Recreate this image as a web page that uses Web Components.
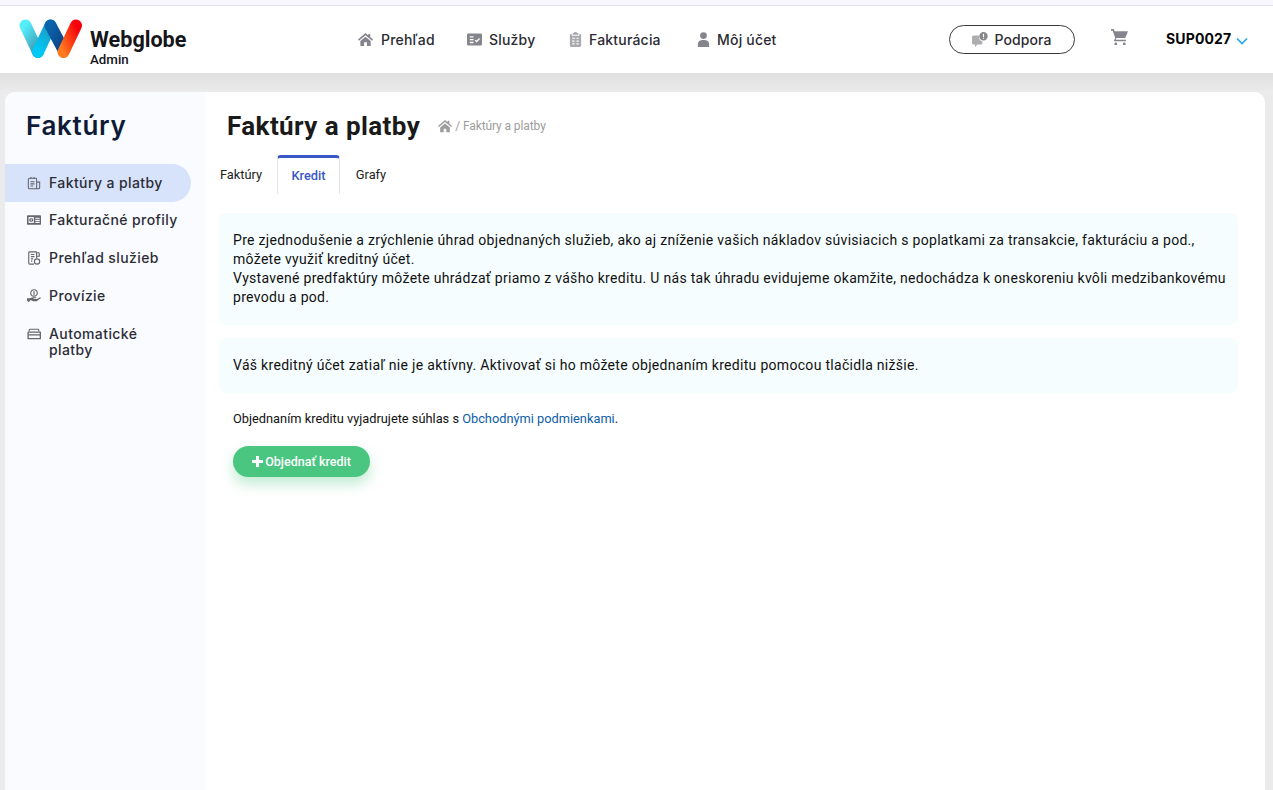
<!DOCTYPE html>
<html lang="sk">
<head>
<meta charset="utf-8">
<title>Faktúry a platby</title>
<style>
  html, body { margin: 0; padding: 0; height: 790px; overflow: hidden; }
  body { background: #ebebeb; font-family: Roboto, sans-serif; color: #111; }
</style>
</head>
<body>
<app-shell>
  <app-header slot="header"></app-header>
  <side-menu slot="side"></side-menu>
  <credit-page slot="main"></credit-page>
</app-shell>

<script>
const ICONS = {
  home: '<path d="M8 1 0 8l1 1.200L8 3.400l7 5.800L16 8l-3-2.600V2h-2v1.700z"/><path d="M2.500 9.600V15h4v-4h3v4h4V9.600L8 5z"/>',
  list: '<path fill-rule="evenodd" d="M1.500 1.500h13A1.500 1.500 0 0 1 16 3v10a1.500 1.500 0 0 1-1.500 1.500h-13A1.500 1.500 0 0 1 0 13V3a1.500 1.500 0 0 1 1.500-1.500zM3 4.500v1.400h4V4.500zm0 3v1.400h4V7.500zm0 3v1.400h4v-1.400zm6.300-2.300-1 1 2 2 3.600-3.800-1-1-2.600 2.700z"/>',
  clip: '<path fill-rule="evenodd" d="M5 1h1.400a1.700 1.700 0 0 1 3.200 0H11v2H5zM3.500 2H4v2h8V2h.5A1.500 1.500 0 0 1 14 3.500v11a1.500 1.500 0 0 1-1.500 1.500h-9A1.500 1.500 0 0 1 2 14.500v-11A1.500 1.500 0 0 1 3.500 2zM4.500 6v1.300h3V6zm4.500 0v1.300h2.500V6zM4.500 9v1.300h2.500V9zm4.500 0v1.300h2.500V9zM4.500 12v1.300h2.500V12zm4.500 0v1.300h2.500V12z"/>',
  user: '<circle cx="8" cy="3.800" r="3.600"/><path d="M2 16v-3.500C2 10 4.500 8.500 8 8.500s6 1.500 6 4V16z"/>',
  cart: '<path d="M0 1h2.600l.8 2H16l-2.600 6.500H5.200l-.8 1.500H14v1.500H2.500l1.500-3L1.600 2.500H0z"/><circle cx="4.500" cy="15" r="1.300"/><circle cx="12.500" cy="15" r="1.300"/>',
  invoice: '<path fill="none" stroke="currentColor" stroke-width="1.200" d="M3 2.500h7a1 1 0 0 1 1 1V14.500H3a1.500 1.500 0 0 1-1.500-1.500V4A1.500 1.500 0 0 1 3 2.500zM11 7h3.500v6a1.500 1.500 0 0 1-1.500 1.500h-2M4 6.500h4.500M4 9h4.500M4 11.500h3M4.500 1v2.500M8 1v2.500"/>',
  profile: '<path fill-rule="evenodd" d="M1 2.500h14a1 1 0 0 1 1 1v9a1 1 0 0 1-1 1H1a1 1 0 0 1-1-1v-9a1 1 0 0 1 1-1zm.800 2v7h6v-7zm7.700 1v1.200h5V5.500zm0 2.300v1.200h5V7.800zm0 2.300v1.200h5v-1.200z"/><circle cx="4.800" cy="8" r="2.300"/><path d="M4.300 6.500h1v3h-1z" fill="#f9fbff"/>',
  report: '<path fill="none" stroke="currentColor" stroke-width="1.300" d="M8 15H3a1 1 0 0 1-1-1V2a1 1 0 0 1 1-1h7a1 1 0 0 1 1 1v6M11 2h2a1 1 0 0 1 1 1v3h-3M4.500 4H8.500M4.500 6.500H8.500M4.500 9H7M4.500 11.500H6"/><circle cx="11.500" cy="12" r="3" fill="none" stroke="currentColor" stroke-width="1.300"/>',
  hand: '<path d="M0 10.500h3l4-1.200h3.500v1.400H7.500v.6h4l3.500-1.900 1 1-5 3.600H7L4 12.500l-2 2.500-2-2z"/><circle cx="8" cy="4.500" r="3.700" fill="none" stroke="currentColor" stroke-width="1.300"/><path d="M7.300 2.500h1.400v4H7.300z"/>',
  card: '<path fill="none" stroke="currentColor" stroke-width="1.200" d="M2.500 5V3.500a1 1 0 0 1 1-1h9a1 1 0 0 1 1 1V5"/><path fill-rule="evenodd" d="M1.500 5H15a1 1 0 0 1 1 1v7a1 1 0 0 1-1 1H1.500a1 1 0 0 1-1-1V6a1 1 0 0 1 1-1zM2 6.500v1.700h12.500V6.500zm0 3.300v2.700h12.500V9.800z"/>'
};

function icon(name, size) {
  return `<svg width="${size}" height="${size}" viewBox="0 0 16 16" fill="currentColor" aria-hidden="true">${ICONS[name]}</svg>`;
}

class AppShell extends HTMLElement {
  constructor() {
    super();
    this.attachShadow({mode: 'open'}).innerHTML = `
      <style>
        :host { display: block; height: 790px; }
        .strip { height: 5px; background: #f8f6ff; border-bottom: 1px solid #e4e0f0; }
        .band { height: 19px; background: linear-gradient(#dfdfdf, #ebebeb); }
        .card {
          display: flex;
          height: 698px;
          margin: 0 8px 0 5px;
          border-radius: 10px 10px 0 0;
          overflow: hidden;
          background: #fff;
        }
        .main { flex: 1; min-width: 0; }
      </style>
      <div class="strip"></div>
      <slot name="header"></slot>
      <div class="band"></div>
      <div class="card">
        <slot name="side"></slot>
        <div class="main"><slot name="main"></slot></div>
      </div>
    `;
  }
}

class AppHeader extends HTMLElement {
  constructor() {
    super();
    const links = [['home', 'Prehľad'], ['list', 'Služby'], ['clip', 'Fakturácia'], ['user', 'Môj účet']];
    this.attachShadow({mode: 'open'}).innerHTML = `
      <style>
        :host {
          display: flex;
          align-items: center;
          height: 67px;
          background: #fff;
          font-family: Inter, "Noto Sans", sans-serif;
          color: #2b2b33;
        }
        .logo { display: flex; align-items: center; width: 358px; padding: 0 0 0 19px; box-sizing: border-box; }
        .logo svg { margin-bottom: 2px; }
        .name { margin-left: 7px; padding-top: 16px; font-family: Roboto, sans-serif; color: #15151a; }
        .name b { display: block; font-size: 21.600px; line-height: 24px; font-weight: 700; }
        .name span { display: block; font-size: 13.300px; line-height: 16px; font-weight: 500; }
        nav { display: flex; width: 591px; }
        nav a { display: flex; align-items: center; font-size: 14px; font-weight: 500; letter-spacing: .2px; }
        nav a:nth-child(1) { width: 109px; }
        nav a:nth-child(2) { width: 101px; }
        nav a:nth-child(3) { width: 128px; }
        nav svg { color: #85858d; margin-right: 6px; }
        nav a:nth-child(1) svg { margin-right: 8px; }
        nav a:nth-child(2) svg { margin-right: 7px; }
        nav a:nth-child(3) svg { color: #a9a9ae; }
        .support {
          display: flex; align-items: center; justify-content: center; gap: 6px;
          width: 124px; height: 27px;
          border: 1px solid #3a3a3a; border-radius: 15px;
          font-size: 14px; font-weight: 500; letter-spacing: .1px;
        }
        .cart { display: flex; margin: 0 0 6px 36px; color: #85858d; }
        .acct { display: flex; align-items: center; margin: 0 0 3px 38px; font-size: 14px; font-weight: 700; letter-spacing: .15px; color: #050505; }
        .acct svg { margin-left: 5px; margin-top: 5px; }
      </style>
      <div class="logo">
        <svg width="64" height="40" viewBox="0 0 64 40" aria-hidden="true">
          <defs>
            <linearGradient id="a" x1="0" y1="0" x2="0.6" y2="1"><stop offset="0" stop-color="#55eefc"/><stop offset="1" stop-color="#3f9fb5"/></linearGradient>
            <linearGradient id="b" x1="0.7" y1="0" x2="0.3" y2="1"><stop offset="0" stop-color="#1c9cc4"/><stop offset="1" stop-color="#00c8f5"/></linearGradient>
            <linearGradient id="c" x1="0" y1="0" x2="1" y2="1"><stop offset="0" stop-color="#0a63ad"/><stop offset="1" stop-color="#0d3f80"/></linearGradient>
            <linearGradient id="d" x1="1" y1="0" x2="0" y2="1"><stop offset="0" stop-color="#f6000c"/><stop offset="1" stop-color="#ff7a1f"/></linearGradient>
          </defs>
          <path d="M6.500 6.500 19 33" stroke="url(#a)" stroke-width="12" stroke-linecap="round"/>
          <path d="M31.500 6.500 19 33" stroke="url(#b)" stroke-width="12" stroke-linecap="round"/>
          <path d="M31.500 6.500 44 30" stroke="url(#c)" stroke-width="12" stroke-linecap="round"/>
          <path d="M57 6.500 44.500 33" stroke="url(#d)" stroke-width="12" stroke-linecap="round"/>
        </svg>
        <div class="name"><b>Webglobe</b><span>Admin</span></div>
      </div>
      <nav>
        ${links.map(([i, t]) => `<a>${icon(i, 15)}<span>${t}</span></a>`).join('')}
      </nav>
      <div class="support">
        <svg width="16" height="15" viewBox="0 0 16 15" aria-hidden="true">
          <path d="M1.500 3.500H7a5 5 0 0 0 3.500 6V11A1.500 1.500 0 0 1 9 12.500H5.500L3 15v-2.500H1.500A1.500 1.500 0 0 1 0 11V5a1.500 1.500 0 0 1 1.500-1.500z" fill="#adadb1"/>
          <path fill-rule="evenodd" d="M11.500 0a4.200 4.200 0 1 1 0 8.400 4.200 4.200 0 0 1 0-8.400zm-.6 5.700v1h1.200v-1zm0-4v3.200h1.200V1.700z" fill="#85858a"/>
        </svg>
        <span>Podpora</span>
      </div>
      <div class="cart">${icon('cart', 17)}</div>
      <div class="acct">SUP0027
        <svg width="12" height="8" viewBox="0 0 12 8"><path d="M1 1.500l5 5 5-5" fill="none" stroke="#1fa8f0" stroke-width="1.600"/></svg>
      </div>
    `;
  }
}

class SideMenu extends HTMLElement {
  constructor() {
    super();
    const items = [['invoice', 'Faktúry a platby', true], ['profile', 'Fakturačné profily'], ['report', 'Prehľad služieb'], ['hand', 'Provízie'], ['card', 'Automatické platby']];
    this.attachShadow({mode: 'open'}).innerHTML = `
      <style>
        :host {
          display: block;
          box-sizing: border-box;
          width: 200px;
          height: 100%;
          background: #f9fbff;
          font-family: Inter, "Noto Sans", sans-serif;
          color: #2d2d35;
        }
        h2 { margin: 0; padding: 17px 0 0 21px; height: 72px; box-sizing: border-box; font-size: 26px; line-height: 34px; font-weight: 600; letter-spacing: .7px; color: #0d1a38; }
        ul { list-style: none; margin: 0; padding: 0 14px 0 0; }
        li {
          display: flex; gap: 8px;
          padding: 11px 12px 11px 22px;
          min-height: 16px;
          font-size: 14px; line-height: 16px; font-weight: 500; letter-spacing: .4px;
        }
        li.on { background: #d6e3fb; border-radius: 0 19px 19px 0; margin-bottom: -1px; }
        li svg { flex: none; color: #66666e; margin-top: 1px; }
        li span { width: 130px; }
      </style>
      <h2>Faktúry</h2>
      <ul>
        ${items.map(([i, t, on]) => `<li class="${on ? 'on' : ''}">${icon(i, 14)}<span>${t}</span></li>`).join('')}
      </ul>
    `;
  }
}

class InfoBox extends HTMLElement {
  constructor() {
    super();
    this.attachShadow({mode: 'open'}).innerHTML = `
      <style>
        :host {
          display: block;
          margin: 0 27px 13px 14px;
          padding: 18px 6px 18px 14px;
          background: #f5fdff;
          border-radius: 8px;
          font-size: 14px;
          line-height: 19px;
          letter-spacing: .3px;
          color: #111;
        }
      </style>
      <slot></slot>
    `;
  }
}

class CreditPage extends HTMLElement {
  constructor() {
    super();
    this.attachShadow({mode: 'open'}).innerHTML = `
      <style>
        :host { display: block; font-family: Roboto, sans-serif; color: #111; }
        header { display: flex; align-items: center; box-sizing: border-box; height: 63px; padding: 5px 0 0 22px; }
        h1 { margin: 0; font-size: 26px; font-weight: 700; letter-spacing: .42px; color: #1a1a1a; }
        .crumb { display: flex; align-items: center; gap: 3px; margin-left: 18px; font-size: 12px; letter-spacing: -.1px; color: #9d9d9d; }
        .tabs { display: flex; height: 39px; margin-bottom: 19px; font-size: 12.800px; }
        .tabs a { display: flex; align-items: center; justify-content: center; box-sizing: border-box; height: 39px; }
        .tabs a:nth-child(1) { width: 72px; color: #222; }
        .tabs a:nth-child(2) { width: 63px; padding-bottom: 2px; border: 1px solid #e6e6ea; border-top: 3px solid #3a57c8; border-bottom: 0; border-radius: 4px 4px 0 0; font-weight: 500; color: #3a57c8; }
        .tabs a:nth-child(3) { width: 62px; color: #222; }
        .note { margin: 17px 0 0 28px; font-size: 12.800px; line-height: 18px; }
        .note a { color: #0d5ea8; }
        .order {
          display: flex; align-items: center; justify-content: center; gap: 2px;
          width: 137px; height: 31px;
          margin: 18px 0 0 28px;
          background: #4ac681;
          border-radius: 16px;
          box-shadow: 0 7px 14px rgba(74, 198, 129, .35);
          color: #fff;
          font-size: 12.500px;
          font-weight: 500;
        }
      </style>
      <header>
        <h1>Faktúry a platby</h1>
        <div class="crumb">${icon('home', 14)}<span>/ Faktúry a platby</span></div>
      </header>
      <div class="tabs"><a>Faktúry</a><a>Kredit</a><a>Grafy</a></div>
      <info-box>Pre zjednodušenie a zrýchlenie úhrad objednaných služieb, ako aj zníženie vašich nákladov súvisiacich s poplatkami za transakcie, fakturáciu a pod., môžete využiť kreditný účet.<br>Vystavené predfaktúry môžete uhrádzať priamo z vášho kreditu. U nás tak úhradu evidujeme okamžite, nedochádza k oneskoreniu kvôli medzibankovému prevodu a pod.</info-box>
      <info-box>Váš kreditný účet zatiaľ nie je aktívny. Aktivovať si ho môžete objednaním kreditu pomocou tlačidla nižšie.</info-box>
      <p class="note">Objednaním kreditu vyjadrujete súhlas s <a>Obchodnými podmienkami</a>.</p>
      <div class="order">
        <svg width="11" height="11" viewBox="0 0 11 11"><path d="M4 0h3v4h4v3H7v4H4V7H0V4h4z" fill="#fff"/></svg>
        <span>Objednať kredit</span>
      </div>
    `;
  }
}

customElements.define('app-shell', AppShell);
customElements.define('app-header', AppHeader);
customElements.define('side-menu', SideMenu);
customElements.define('info-box', InfoBox);
customElements.define('credit-page', CreditPage);
</script>
</body>
</html>
